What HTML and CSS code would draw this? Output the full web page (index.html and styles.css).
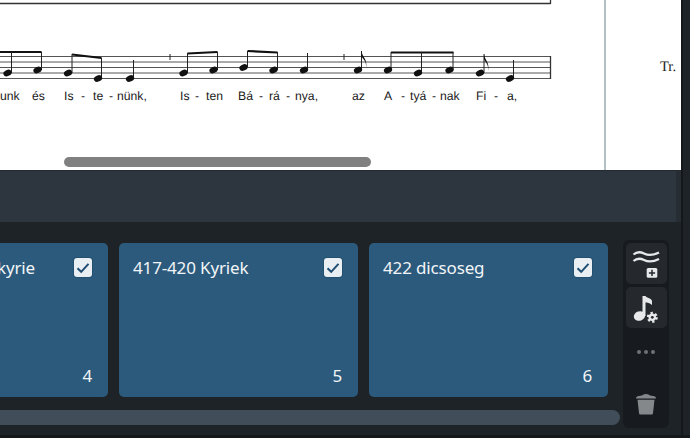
FILE: index.html
```html
<!DOCTYPE html>
<html lang="en">
<head>
  <meta charset="UTF-8">
  <meta name="viewport" content="width=device-width, initial-scale=1.0">
  <title>Score parts</title>
  <link rel="stylesheet" href="styles.css">
</head>
<body>
  <div class="shell">
    <div class="main">
      <div class="score">
        <svg class="sheet" width="681" height="170" viewBox="0 0 681 170">
          <!-- previous system -->
          <path class="line" d="M0 3.5H550.5M550.5 0V4"/>

          <!-- staff -->
          <path class="staff" d="M0 56.5H550M0 62H550M0 67.5H550M0 73H550M0 78.5H550"/>
          <path class="line" d="M550.5 56V79"/>

          <!-- beams -->
          <path class="beam" d="M0 52H41.5M72 54.5L101.5 58M187.5 53.5L217.5 52M247.5 51L277.5 52.5M391 52.5H453.5"/>

          <!-- stems -->
          <path class="stem" d="M11.5 52V73M41.5 52V70M72 54V73M101.5 58V78M133.5 60V78M187.5 53V73M217.5 52V70M247.5 51V67M277.5 52V70M307.5 53V70M361.5 51V70M391 52V70M421.5 52V73M453 52V70M484 54V73M513.5 60V78"/>
          <path class="stem" d="M170 54V60M344 54V60"/>

          <!-- flags -->
          <path class="flag" d="M361.5 51C362 57 368 59 366 68C367 60 362 59 361.5 56Z"/>
          <path class="flag" d="M484 54C484.5 60 490 62 488 71C489 63 484.5 62 484 59Z"/>

          <!-- note heads -->
          <g class="heads">
            <ellipse cx="7.5" cy="73" rx="4.3" ry="3.1" transform="rotate(-22 7.5 73)"/>
            <ellipse cx="37.5" cy="70" rx="4.3" ry="3.1" transform="rotate(-22 37.5 70)"/>
            <ellipse cx="68" cy="73" rx="4.3" ry="3.1" transform="rotate(-22 68 73)"/>
            <ellipse cx="98" cy="78.5" rx="4.3" ry="3.1" transform="rotate(-22 98 78.5)"/>
            <ellipse cx="130" cy="78.5" rx="4.3" ry="3.1" transform="rotate(-22 130 78.5)"/>
            <ellipse cx="183.5" cy="73" rx="4.3" ry="3.1" transform="rotate(-22 183.5 73)"/>
            <ellipse cx="213.5" cy="70" rx="4.3" ry="3.1" transform="rotate(-22 213.5 70)"/>
            <ellipse cx="243.5" cy="67.5" rx="4.3" ry="3.1" transform="rotate(-22 243.5 67.5)"/>
            <ellipse cx="273.5" cy="70" rx="4.3" ry="3.1" transform="rotate(-22 273.5 70)"/>
            <ellipse cx="304" cy="70" rx="4.3" ry="3.1" transform="rotate(-22 304 70)"/>
            <ellipse cx="358" cy="70" rx="4.3" ry="3.1" transform="rotate(-22 358 70)"/>
            <ellipse cx="388" cy="70" rx="4.3" ry="3.1" transform="rotate(-22 388 70)"/>
            <ellipse cx="418" cy="73" rx="4.3" ry="3.1" transform="rotate(-22 418 73)"/>
            <ellipse cx="449.5" cy="70" rx="4.3" ry="3.1" transform="rotate(-22 449.5 70)"/>
            <ellipse cx="480" cy="73" rx="4.3" ry="3.1" transform="rotate(-22 480 73)"/>
            <ellipse cx="510" cy="78.5" rx="4.3" ry="3.1" transform="rotate(-22 510 78.5)"/>
          </g>

          <!-- lyrics -->
          <g class="lyrics">
            <text x="0" y="99.5">unk</text>
            <text x="32" y="99.5">és</text>
            <text x="64" y="99.5">Is</text>
            <text x="81" y="99.5">-</text>
            <text x="93" y="99.5">te</text>
            <text x="109" y="99.5">-</text>
            <text x="117" y="99.5">nünk,</text>
            <text x="180" y="99.5">Is</text>
            <text x="195" y="99.5">-</text>
            <text x="206" y="99.5">ten</text>
            <text x="238" y="99.5">Bá</text>
            <text x="259" y="99.5">-</text>
            <text x="269" y="99.5">rá</text>
            <text x="286" y="99.5">-</text>
            <text x="295" y="99.5">nya,</text>
            <text x="352" y="99.5">az</text>
            <text x="384" y="99.5">A</text>
            <text x="401" y="99.5">-</text>
            <text x="410" y="99.5">tyá</text>
            <text x="432" y="99.5">-</text>
            <text x="440" y="99.5">nak</text>
            <text x="476" y="99.5">Fi</text>
            <text x="494" y="99.5">-</text>
            <text x="507" y="99.5">a,</text>
          </g>

          <!-- edge of the page, next page starts after it -->
          <path class="page-edge" d="M605 0V170"/>
          <text class="next-page" x="660" y="71">Tr.</text>
        </svg>
        <div class="score-scroll"></div>
      </div>

      <div class="toolbar"></div>

      <div class="deck">
        <div class="deck-main">
          <div class="cards">
            <div class="card">
              <div class="card-top"><span class="title-end">kyrie</span><span class="check"><svg width="14" height="12" viewBox="0 0 14 12"><path d="M1.5 6.2L5.2 9.8L12.5 1.8"/></svg></span></div>
              <div class="card-num">4</div>
            </div>
            <div class="card">
              <div class="card-top"><span>417-420 Kyriek</span><span class="check"><svg width="14" height="12" viewBox="0 0 14 12"><path d="M1.5 6.2L5.2 9.8L12.5 1.8"/></svg></span></div>
              <div class="card-num">5</div>
            </div>
            <div class="card">
              <div class="card-top"><span>422 dicsoseg</span><span class="check"><svg width="14" height="12" viewBox="0 0 14 12"><path d="M1.5 6.2L5.2 9.8L12.5 1.8"/></svg></span></div>
              <div class="card-num">6</div>
            </div>
          </div>
          <div class="deck-scroll"></div>
        </div>

        <div class="tools">
          <button class="tool">
            <svg width="41" height="41" viewBox="0 0 41 41">
              <path class="wave" d="M7.5 11.5C11 8.5 14 8.500 18 10.500C22 12.500 26 13 33 9.500"/>
              <path class="wave" d="M7.5 18C11 15 14 15 18 17C22 19 26 19.5 33 16"/>
              <rect class="plus-box" x="20.7" y="25" width="10.6" height="9.8" rx="1.5"/>
              <path class="plus" d="M26 26.8V33M22.9 29.9H29.1"/>
            </svg>
          </button>
          <button class="tool">
            <svg width="41" height="41" viewBox="0 0 41 41">
              <ellipse class="fill" cx="13.5" cy="29" rx="5.8" ry="4.7" transform="rotate(-20 13.5 29)"/>
              <path class="fill" d="M16.5 9H19.5C20.5 11 26 11.5 26 14V18C24 16 21 15.5 19.5 15.5V29H16.5Z"/>
              <circle class="gear-teeth" cx="26.3" cy="30.3" r="4.2"/>
              <circle class="gear" cx="26.3" cy="30.3" r="3.8"/>
              <circle class="gear-hole" cx="26.3" cy="30.3" r="1.4"/>
            </svg>
          </button>
          <div class="dots"><i></i><i></i><i></i></div>
          <svg class="trash" width="20" height="22" viewBox="0 0 20 22">
            <path d="M0 5.5C0 3.8 1 3.3 3 3C5 2.7 7 2.5 7.5 1.5C8.5 0.8 11.5 0.8 12.5 1.5C13 2.5 15 2.7 17 3C19 3.3 20 3.8 20 5.5Z"/>
            <path d="M1.5 6.8H18.5L17 20C16.9 21 16.3 21.5 15.5 21.5H4.5C3.7 21.5 3.1 21 3 20Z"/>
          </svg>
        </div>
      </div>
    </div>
    <div class="rail"></div>
    <div class="side"></div>
  </div>
</body>
</html>
```

FILE: styles.css
```css
* { box-sizing: border-box; }
html, body { margin: 0; height: 438px; overflow: hidden; background: #14181b; }
body { font-family: "Noto Sans", sans-serif; }

.shell { display: flex; height: 435px; }
.main { flex: none; width: 681px; }
.rail { flex: none; width: 2px; background: #14181b; }
.side { flex: 1; background: #1e2327; }

/* score */
.score { position: relative; height: 170px; background: #fff; overflow: hidden; }
.sheet { display: block; }
.line { fill: none; stroke: #333; stroke-width: 1.3; }
.staff { fill: none; stroke: #555; stroke-width: 1; }
.stem { fill: none; stroke: #222; stroke-width: 1; }
.beam { fill: none; stroke: #111; stroke-width: 2.2; }
.flag, .heads { fill: #111; }
.lyrics { font-family: "Liberation Sans", Arial, sans-serif; font-size: 12.2px; fill: #1a1a1a; text-rendering: geometricPrecision; }
.page-edge { fill: none; stroke: #9aacb4; stroke-width: 1.5; }
.next-page { font-family: "Liberation Serif", serif; font-size: 14.5px; fill: #222; text-rendering: geometricPrecision; }
.score-scroll { position: absolute; left: 64px; top: 157px; width: 307px; height: 10px; border-radius: 5px; background: #808080; }

/* band under the score */
.toolbar { height: 52px; background: #2d353e; border-top: 1px solid #222a31; border-right: 5px solid #262d33; }

/* parts deck */
.deck { display: flex; height: 213px; background: #1e2327; }
.deck-main { flex: none; width: 620px; padding-top: 21px; overflow: hidden; }
.cards { display: flex; gap: 11.5px; margin-left: -131px; }
.card { display: flex; flex-direction: column; justify-content: space-between; flex: none; width: 238.5px; height: 154px; padding: 13px 15.5px 9px 14px; border-radius: 5px; background: #2c5a7c; color: #f2f5f8; font-size: 17px; line-height: 24px; letter-spacing: -0.15px; }
.card-top { display: flex; justify-content: space-between; align-items: flex-start; white-space: nowrap; }
.title-end { margin-left: auto; margin-right: 39px; }
.card-num { text-align: right; }
.check { display: flex; align-items: center; justify-content: center; flex: none; width: 18px; height: 19px; margin-top: 2px; border-radius: 3px; background: #e9eef3; box-shadow: 0 0 0 1px #23506f; }
.check svg { display: block; }
.check path { fill: none; stroke: #1f4c73; stroke-width: 2; }
.deck-scroll { height: 15px; margin-top: 13px; border-radius: 0 8px 8px 0; background: #414e5a; }

/* tool column */
.tools { display: flex; flex-direction: column; align-items: center; gap: 3px; flex: none; width: 46px; height: 188px; margin: 18px 0 0 3px; padding-top: 3px; border-radius: 6px; background: #171b1f; }
.tool { display: block; width: 41px; height: 41px; padding: 0; border: 0; border-radius: 5px; background: #25292e; }
.tool svg { display: block; }
.wave { fill: none; stroke: #e6e8ea; stroke-width: 2.3; }
.plus-box, .fill, .gear { fill: #e6e8ea; }
.plus { fill: none; stroke: #25292e; stroke-width: 1.5; }
.gear-teeth { fill: none; stroke: #e6e8ea; stroke-width: 2.6; stroke-dasharray: 2.2 2.2; }
.gear-hole { fill: #25292e; }
.dots { display: flex; gap: 3.3px; margin-top: 19px; }
.dots i { width: 4px; height: 4px; border-radius: 50%; background: #6d7276; }
.trash { margin-top: 36px; fill: #85888b; }
```
